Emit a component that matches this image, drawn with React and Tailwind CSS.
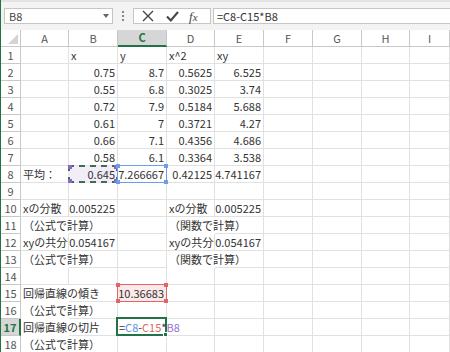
import React from 'react'

const font = { fontFamily: '"Noto Sans CJK JP", "Noto Sans", sans-serif' }

// column widths (incl. right gridline)
const cols = [
  { key: 'A', w: 'w-[48px]' },
  { key: 'B', w: 'w-[49px]' },
  { key: 'C', w: 'w-[49px]' },
  { key: 'D', w: 'w-[48px]' },
  { key: 'E', w: 'w-[49px]' },
  { key: 'F', w: 'w-[49px]' },
  { key: 'G', w: 'w-[49px]' },
  { key: 'H', w: 'w-[48px]' },
  { key: 'I', w: 'w-[60px]' },
]

// t: text, n: number (right aligned), spill: text runs into next cell, clip: text cut at border
const rows = [
  { A: {}, B: { t: 'x' }, C: { t: 'y' }, D: { t: 'x^2' }, E: { t: 'xy' } },
  { B: { n: '0.75' }, C: { n: '8.7' }, D: { n: '0.5625' }, E: { n: '6.525' } },
  { B: { n: '0.55' }, C: { n: '6.8' }, D: { n: '0.3025' }, E: { n: '3.74' } },
  { B: { n: '0.72' }, C: { n: '7.9' }, D: { n: '0.5184' }, E: { n: '5.688' } },
  { B: { n: '0.61' }, C: { n: '7' }, D: { n: '0.3721' }, E: { n: '4.27' } },
  { B: { n: '0.66' }, C: { n: '7.1' }, D: { n: '0.4356' }, E: { n: '4.686' } },
  { B: { n: '0.58' }, C: { n: '6.1' }, D: { n: '0.3364' }, E: { n: '3.538' } },
  { A: { t: '平均：' }, B: { n: '0.645', mark: 'copy' }, C: { n: '7.266667', mark: 'blue' }, D: { n: '0.42125' }, E: { n: '4.741167' } },
  {},
  { A: { t: 'xの分散' }, B: { n: '0.005225' }, D: { t: 'xの分散' }, E: { n: '0.005225' } },
  { A: { t: '（公式で計算）', spill: true }, D: { t: '（関数で計算）', spill: true } },
  { A: { t: 'xyの共分散', clip: true }, B: { n: '0.054167' }, D: { t: 'xyの共分散', clip: true }, E: { n: '0.054167' } },
  { A: { t: '（公式で計算）', spill: true }, D: { t: '（関数で計算）', spill: true } },
  {},
  { A: { t: '回帰直線の傾き', spill: true }, C: { n: '10.36683', mark: 'red' } },
  { A: { t: '（公式で計算）', spill: true } },
  { A: { t: '回帰直線の切片', spill: true }, C: { mark: 'active' } },
  { A: { t: '（公式で計算）', spill: true } },
]

function Corners({ color }) {
  return (
    <>
      <span className={`absolute -left-[2px] -top-[2px] h-[4px] w-[4px] ${color}`} />
      <span className={`absolute -right-[2px] -top-[2px] h-[4px] w-[4px] ${color}`} />
      <span className={`absolute -left-[2px] -bottom-[2px] h-[4px] w-[4px] ${color}`} />
      <span className={`absolute -right-[2px] -bottom-[2px] h-[4px] w-[4px] ${color}`} />
    </>
  )
}

function Cell({ col, cell, last }) {
  const c = cell || {}
  let border = 'border-r border-[#e1e1e1]'
  if (c.spill) border = 'border-r border-transparent'
  return (
    <div
      className={`relative h-[17px] shrink-0 border-b border-[#e1e1e1] ${border} ${last ? 'flex-1' : col.w} ${c.clip ? 'overflow-hidden' : ''}`}
    >
      {c.mark === 'copy' && (
        <div className="absolute -left-px -top-px -right-px -bottom-px z-20 border-2 border-dashed border-[#3d6e53] bg-[#ece6f3]/70">
          <Corners color="bg-[#8f64c9]" />
        </div>
      )}
      {c.mark === 'blue' && (
        <div className="absolute -left-px -top-px -right-px -bottom-px z-20 border border-[#6d9eeb]">
          <Corners color="bg-[#6d9eeb]" />
        </div>
      )}
      {c.mark === 'red' && (
        <div className="absolute -left-px -top-px -right-px -bottom-px z-20 border border-[#e06666] bg-[#fce9e9]">
          <Corners color="bg-[#e06666]" />
        </div>
      )}
      {c.mark === 'active' && (
        <div className="absolute -left-[2px] -top-[2px] -right-px -bottom-px z-20 border-2 border-[#217346] bg-white">
          <span className="absolute -right-[3px] -bottom-[3px] h-[5px] w-[5px] border border-white bg-[#217346]" />
        </div>
      )}
      {c.t && (
        <span className="absolute left-[2px] top-0 z-30 whitespace-nowrap text-[11px] leading-[17px] text-[#333]">
          {c.t}
        </span>
      )}
      {c.n && (
        <span className="absolute right-[2px] top-0 z-30 whitespace-nowrap text-[11px] leading-[17px] text-[#333]">
          {c.n}
        </span>
      )}
      {c.mark === 'active' && (
        <span className="absolute left-[1px] top-0 z-30 whitespace-nowrap text-[11px] leading-[17px] text-[#333]">
          =<span className="text-[#5b8fe3]">C8</span>-<span className="text-[#e06666]">C15</span>*<span className="text-[#9d6fd6]">B8</span>
        </span>
      )}
    </div>
  )
}

function FormulaBar() {
  return (
    <div className="flex h-[30px] items-start border-t-2 border-[#e3e3e3] bg-[#f3f3f3] pt-[6px]">
      {/* Name box */}
      <div className="ml-[3px] flex h-[16px] w-[109px] items-center justify-between border border-[#c6c6c6] bg-white pl-[4px] pr-[3px]">
        <span className="text-[11px] leading-none text-[#444]">B8</span>
        <svg width="6" height="4" viewBox="0 0 6 4">
          <path d="M0 0 L6 0 L3 4 Z" fill="#666" />
        </svg>
      </div>
      {/* grip */}
      <div className="ml-[9px] mt-[3px] flex flex-col gap-[2px]">
        <span className="h-[2px] w-[2px] bg-[#888]" />
        <span className="h-[2px] w-[2px] bg-[#888]" />
        <span className="h-[2px] w-[2px] bg-[#888]" />
      </div>
      {/* cancel / enter / fx */}
      <div className="ml-[9px] flex h-[16px] w-[78px] items-center border border-[#c6c6c6] bg-white pl-[8px]">
        <svg width="12" height="12" viewBox="0 0 12 12">
          <path d="M1 1 L11 11 M11 1 L1 11" stroke="#444" strokeWidth="1.4" />
        </svg>
        <svg className="ml-[12px]" width="13" height="11" viewBox="0 0 13 11">
          <path d="M1 5.5 L4.8 9.5 L12 1" stroke="#444" strokeWidth="2" fill="none" />
        </svg>
        <span className="ml-[10px] font-serif text-[13px] italic leading-none text-[#444]" style={{ fontFamily: '"Liberation Serif", serif' }}>
          f<span className="text-[11px]">x</span>
        </span>
      </div>
      {/* formula */}
      <div className="ml-[2px] flex h-[16px] flex-1 items-center border border-r-0 border-[#c6c6c6] bg-white pl-[3px]">
        <span className="text-[11px] leading-none text-[#333]">=C8-C15*B8</span>
      </div>
    </div>
  )
}

export default function App() {
  return (
    <div className="h-[352px] w-[450px] overflow-hidden border-l border-[#217346] bg-white" style={font}>
      <FormulaBar />

      {/* column headers */}
      <div className="flex h-[17px] bg-white">
        <div className="relative h-[17px] w-[20px] shrink-0 border-b border-r border-[#c8c8c8]">
          <svg className="absolute bottom-[2px] right-[2px]" width="10" height="10" viewBox="0 0 10 10">
            <path d="M10 0 L10 10 L0 10 Z" fill="#d4d4d4" />
          </svg>
        </div>
        {cols.map((col, i) => {
          const active = col.key === 'C'
          const last = i === cols.length - 1
          return (
            <div
              key={col.key}
              className={`flex h-[17px] shrink-0 items-center justify-center border-r text-[11px] ${last ? 'flex-1' : col.w} ${
                active
                  ? 'border-b-2 border-r-[#c8c8c8] border-b-[#217346] bg-[#d6d6d6] font-bold text-[#217346]'
                  : 'border-b border-[#c8c8c8] text-[#555]'
              }`}
            >
              {col.key}
            </div>
          )
        })}
      </div>

      {/* rows */}
      {rows.map((row, r) => {
        const active = r === 16
        return (
          <div key={r} className="flex h-[17px]">
            <div
              className={`flex h-[17px] w-[20px] shrink-0 items-center justify-center border-b text-[11px] ${
                active
                  ? 'border-r-2 border-b-[#c8c8c8] border-r-[#217346] bg-[#d6d6d6] font-bold text-[#217346]'
                  : 'border-r border-[#c8c8c8] text-[#555]'
              }`}
            >
              {r + 1}
            </div>
            {cols.map((col, i) => (
              <Cell key={col.key} col={col} cell={row[col.key]} last={i === cols.length - 1} />
            ))}
          </div>
        )
      })}
    </div>
  )
}
